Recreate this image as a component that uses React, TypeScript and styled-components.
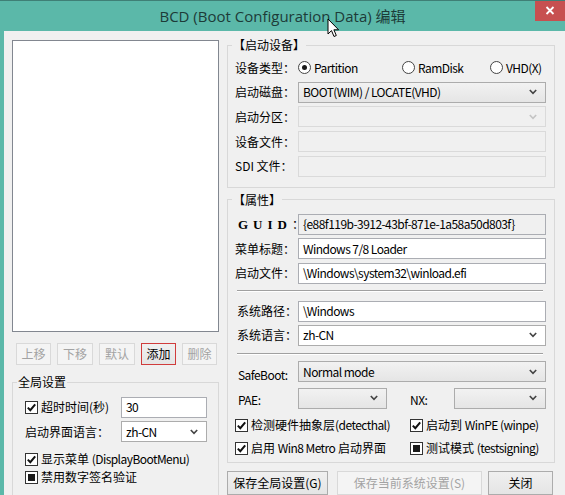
import React from 'react';
import styled, { createGlobalStyle } from 'styled-components';

const GlobalStyle = createGlobalStyle`
  * { box-sizing: border-box; }
  html, body { margin: 0; padding: 0; background: #5bb8a9; }
  body {
    font-family: "Noto Sans CJK SC", "Noto Sans", sans-serif;
    font-size: 12px;
    color: #000;
  }
`;

const Window = styled.div`
  position: relative;
  width: 565px;
  height: 495px;
  overflow: hidden;
  background: #5bb8a9;
  border-top: 1px solid #3f7f76;
  display: flex;
  flex-direction: column;
`;

const TitleBar = styled.div`
  height: 30px;
  display: grid;
  grid-template-columns: 1fr auto 1fr;
`;

const Title = styled.div`
  grid-column: 2;
  font-family: "Open Sans", "Noto Sans CJK SC", sans-serif;
  font-size: 15px;
  line-height: 30px;
  color: #1d3b38;
  white-space: nowrap;
`;

const CloseButton = styled.div`
  grid-column: 3;
  justify-self: end;
  width: 30px;
  height: 21px;
  margin-top: -1px;
  background: #c75050;
  display: flex;
  align-items: center;
  justify-content: center;
`;

const Cursor = styled.svg`
  position: absolute;
  left: 327px;
  top: 17px;
`;

const Body = styled.div`
  flex: 1;
  margin-left: 4px;
  background: #f0f0f0;
  display: flex;
  gap: 8px;
  padding: 6px 10px 0 8px;
`;

const LeftColumn = styled.div`
  width: 207px;
  padding-top: 3px;
  display: flex;
  flex-direction: column;
`;

const RightColumn = styled.div`
  width: 328px;
  display: flex;
  flex-direction: column;
`;

const ListBox = styled.div`
  height: 292px;
  flex-shrink: 0;
  background: #fff;
  border: 1px solid #828790;
`;

const ButtonRow = styled.div`
  margin-top: 11px;
  padding: 0 2px 0 4px;
  display: flex;
  justify-content: space-between;
`;

const Button = styled.div<{ $disabled?: boolean; $focused?: boolean; $w: number; $h?: number }>`
  width: ${(p) => p.$w}px;
  height: ${(p) => p.$h ?? 22}px;
  flex-shrink: 0;
  display: flex;
  align-items: center;
  justify-content: center;
  font-size: 12px;
  line-height: 16px;
  white-space: nowrap;
  color: ${(p) => (p.$disabled ? '#a3a3a3' : '#000')};
  background: ${(p) => (p.$disabled ? '#f4f4f4' : 'linear-gradient(#f0f0f0, #e5e5e5)')};
  border: 1px solid ${(p) => (p.$focused ? '#d03c3c' : p.$disabled ? '#d9d9d9' : '#acacac')};
`;

const Latin = styled.span`
  letter-spacing: -0.55px;
`;

const Group = styled.fieldset<{ $mt?: number }>`
  margin: ${(p) => p.$mt ?? 0}px 0 0;
  padding: 0;
  min-width: 0;
  flex-shrink: 0;
  border: 1px solid #d8d8d8;
`;

const Legend = styled.legend`
  margin-left: 4px;
  padding: 0 1px;
  font-size: 12px;
  line-height: 16px;
`;

const GroupBody = styled.div<{ $pt: number; $pb: number; $pl: number; $pr: number; $gap?: number }>`
  display: flex;
  flex-direction: column;
  gap: ${(p) => p.$gap ?? 0}px;
  padding: ${(p) => `${p.$pt}px ${p.$pr}px ${p.$pb}px ${p.$pl}px`};
`;

const Row = styled.div<{ $cols: string; $h?: number; $mt?: number }>`
  display: grid;
  grid-template-columns: ${(p) => p.$cols};
  align-items: center;
  height: ${(p) => p.$h ?? 21}px;
  margin-top: ${(p) => p.$mt ?? 0}px;
`;

const Label = styled.span<{ $latin?: boolean; $pl?: number; $drop?: number }>`
  white-space: nowrap;
  font-size: 12px;
  line-height: 16px;
  letter-spacing: ${(p) => (p.$latin ? '-0.55px' : '0')};
  padding-left: ${(p) => p.$pl ?? 0}px;
  margin-top: ${(p) => p.$drop ?? 0}px;
`;

const GuidLabel = styled.span`
  white-space: nowrap;
  font-family: "Liberation Serif", serif;
  font-weight: bold;
  font-size: 13px;
  letter-spacing: 5px;
  line-height: 16px;
  padding-left: 3px;
  span {
    font-family: "Noto Sans CJK SC", sans-serif;
    font-weight: normal;
    font-size: 12px;
    letter-spacing: 0;
  }
`;

const Field = styled.div<{ $variant?: 'normal' | 'readonly' | 'disabled' }>`
  height: 21px;
  padding: 0 4px;
  display: flex;
  align-items: center;
  font-size: 12px;
  line-height: 16px;
  letter-spacing: -0.55px;
  white-space: nowrap;
  overflow: hidden;
  background: ${(p) => (p.$variant === 'normal' || !p.$variant ? '#fff' : '#f0f0f0')};
  border: 1px solid ${(p) => (p.$variant === 'disabled' ? '#dadada' : '#abadb3')};
`;

const ComboBox = styled.div<{ $variant: 'list' | 'edit' | 'disabled' }>`
  height: 21px;
  padding: 0 8px 0 4px;
  display: flex;
  align-items: center;
  justify-content: space-between;
  font-size: 12px;
  line-height: 16px;
  letter-spacing: -0.55px;
  white-space: nowrap;
  background: ${(p) =>
    p.$variant === 'list' ? 'linear-gradient(#f2f2f2, #e5e5e5)' : p.$variant === 'edit' ? '#fff' : '#f0f0f0'};
  border: 1px solid ${(p) => (p.$variant === 'disabled' ? '#dadada' : '#acacac')};
  svg {
    flex-shrink: 0;
    stroke: ${(p) => (p.$variant === 'disabled' ? '#c4c4c4' : '#444')};
  }
`;

const Separator = styled.div<{ $mt: number; $mb: number }>`
  margin: ${(p) => `${p.$mt}px 3px ${p.$mb}px 2px`};
  border-top: 1px solid #a0a0a0;
  border-bottom: 1px solid #fff;
`;

const CheckLine = styled.div`
  display: flex;
  align-items: center;
  gap: 3px;
  white-space: nowrap;
  font-size: 12px;
  line-height: 16px;
`;

const Box = styled.span`
  width: 13px;
  height: 13px;
  border: 1px solid #333;
  background: #fff;
  display: inline-flex;
  align-items: center;
  justify-content: center;
  flex-shrink: 0;
`;

const MixedDot = styled.span`
  width: 7px;
  height: 7px;
  background: #1a1a1a;
`;

const RadioCircle = styled.span<{ $on?: boolean }>`
  width: 13px;
  height: 13px;
  border-radius: 50%;
  border: 1px solid #444;
  background: #fff;
  display: inline-flex;
  align-items: center;
  justify-content: center;
  flex-shrink: 0;
  &::after {
    content: '';
    width: 5px;
    height: 5px;
    border-radius: 50%;
    background: ${(p) => (p.$on ? '#1a1a1a' : 'transparent')};
  }
`;

const FooterRow = styled.div`
  margin-top: 8px;
  display: flex;
`;

const Chevron = () => (
  <svg width="8" height="6" viewBox="0 0 8 6" fill="none" strokeWidth="1.6">
    <polyline points="0.8,1 4,4.4 7.2,1" />
  </svg>
);

const Check = ({ state, children }: { state: 'on' | 'mixed'; children: React.ReactNode }) => (
  <CheckLine>
    <Box>
      {state === 'on' ? (
        <svg width="11" height="11" viewBox="0 0 11 11">
          <polyline points="1.8,5.6 4.3,8.2 9.2,2.3" fill="none" stroke="#111" strokeWidth="2" />
        </svg>
      ) : (
        <MixedDot />
      )}
    </Box>
    <span>{children}</span>
  </CheckLine>
);

const Radio = ({ on, label }: { on?: boolean; label: string }) => (
  <CheckLine>
    <RadioCircle $on={on} />
    <Latin>{label}</Latin>
  </CheckLine>
);

export default function App() {
  return (
    <Window>
      <GlobalStyle />
      <TitleBar>
        <Title>BCD (Boot Configuration Data) 编辑</Title>
        <CloseButton>
          <svg width="10" height="9" viewBox="0 0 10 9">
            <path d="M1.5 1 L8.5 8 M8.5 1 L1.5 8" stroke="#fff" strokeWidth="1.8" />
          </svg>
        </CloseButton>
      </TitleBar>
      <Cursor width="13" height="20" viewBox="0 0 13 20">
        <path
          d="M1 1 L1 16 L4.5 12.6 L7 18.5 L9.3 17.5 L6.9 11.8 L11.6 11.8 Z"
          fill="#fff"
          stroke="#000"
          strokeWidth="1"
          strokeLinejoin="round"
        />
      </Cursor>
      <Body>
        <LeftColumn>
          <ListBox />
          <ButtonRow>
            <Button $w={35} $disabled>上移</Button>
            <Button $w={36} $disabled>下移</Button>
            <Button $w={36} $disabled>默认</Button>
            <Button $w={35} $focused>添加</Button>
            <Button $w={35} $disabled>删除</Button>
          </ButtonRow>
          <Group $mt={9}>
            <Legend>全局设置</Legend>
            <GroupBody $pt={6} $pb={24} $pl={12} $pr={11}>
              <Row $cols="96px 86px" $h={22}>
                <Check state="on">超时时间(秒)</Check>
                <Field>30</Field>
              </Row>
              <Row $cols="96px 86px" $mt={3}>
                <Label>启动界面语言：</Label>
                <ComboBox $variant="edit">
                  zh-CN
                  <Chevron />
                </ComboBox>
              </Row>
              <Row $cols="1fr" $h={18} $mt={8}>
                <Check state="on">
                  显示菜单 <Latin>(DisplayBootMenu)</Latin>
                </Check>
              </Row>
              <Row $cols="1fr" $h={18}>
                <Check state="mixed">禁用数字签名验证</Check>
              </Row>
            </GroupBody>
          </Group>
        </LeftColumn>

        <RightColumn>
          <Group>
            <Legend>【启动设备】</Legend>
            <GroupBody $pt={4} $pb={10} $pl={7} $pr={8} $gap={3.7}>
              <Row $cols="63px 104px 88px auto">
                <Label>设备类型：</Label>
                <Radio on label="Partition" />
                <Radio label="RamDisk" />
                <Radio label="VHD(X)" />
              </Row>
              <Row $cols="63px 1fr">
                <Label>启动磁盘：</Label>
                <ComboBox $variant="list">
                  BOOT(WIM) / LOCATE(VHD)
                  <Chevron />
                </ComboBox>
              </Row>
              <Row $cols="63px 1fr">
                <Label>启动分区：</Label>
                <ComboBox $variant="disabled">
                  <span />
                  <Chevron />
                </ComboBox>
              </Row>
              <Row $cols="63px 1fr">
                <Label>设备文件：</Label>
                <Field $variant="disabled" />
              </Row>
              <Row $cols="63px 1fr">
                <Label>SDI 文件：</Label>
                <Field $variant="disabled" />
              </Row>
            </GroupBody>
          </Group>

          <Group $mt={4}>
            <Legend>【属性】</Legend>
            <GroupBody $pt={6} $pb={2} $pl={7} $pr={8}>
              <Row $cols="63px 1fr">
                <GuidLabel>
                  GUID<span>：</span>
                </GuidLabel>
                <Field $variant="readonly">{'{e88f119b-3912-43bf-871e-1a58a50d803f}'}</Field>
              </Row>
              <Row $cols="63px 1fr" $mt={3.5}>
                <Label>菜单标题：</Label>
                <Field>Windows 7/8 Loader</Field>
              </Row>
              <Row $cols="63px 1fr" $mt={3.5}>
                <Label>启动文件：</Label>
                <Field>\Windows\system32\winload.efi</Field>
              </Row>
              <Separator $mt={6} $mb={9} />
              <Row $cols="63px 1fr">
                <Label $pl={2}>系统路径：</Label>
                <Field>\Windows</Field>
              </Row>
              <Row $cols="63px 1fr" $mt={3}>
                <Label $pl={2}>系统语言：</Label>
                <ComboBox $variant="edit">
                  zh-CN
                  <Chevron />
                </ComboBox>
              </Row>
              <Separator $mt={7} $mb={6} />
              <Row $cols="63px 1fr">
                <Label $latin $pl={3} $drop={6}>SafeBoot:</Label>
                <ComboBox $variant="list">
                  Normal mode
                  <Chevron />
                </ComboBox>
              </Row>
              <Row $cols="63px 89px 23px 44px 1fr" $mt={6}>
                <Label $latin $pl={3} $drop={4}>PAE:</Label>
                <ComboBox $variant="list">
                  <span />
                  <Chevron />
                </ComboBox>
                <span />
                <Label $latin $drop={4}>NX:</Label>
                <ComboBox $variant="list">
                  <span />
                  <Chevron />
                </ComboBox>
              </Row>
              <Row $cols="175px 1fr" $h={23} $mt={5}>
                <Check state="on">
                  检测硬件抽象层<Latin>(detecthal)</Latin>
                </Check>
                <Check state="on">
                  启动到 <Latin>WinPE (winpe)</Latin>
                </Check>
              </Row>
              <Row $cols="175px 1fr" $h={23}>
                <Check state="on">
                  启用 <Latin>Win8 Metro</Latin> 启动界面
                </Check>
                <Check state="mixed">
                  测试模式 <Latin>(testsigning)</Latin>
                </Check>
              </Row>
            </GroupBody>
          </Group>

          <FooterRow>
            <Button $w={101} $h={24}>保存全局设置(G)</Button>
            <Button $w={145} $h={24} $disabled style={{ marginLeft: 9 }}>
              保存当前系统设置(S)
            </Button>
            <Button $w={65} $h={24} style={{ marginLeft: 6 }}>
              关闭
            </Button>
          </FooterRow>
        </RightColumn>
      </Body>
    </Window>
  );
}
